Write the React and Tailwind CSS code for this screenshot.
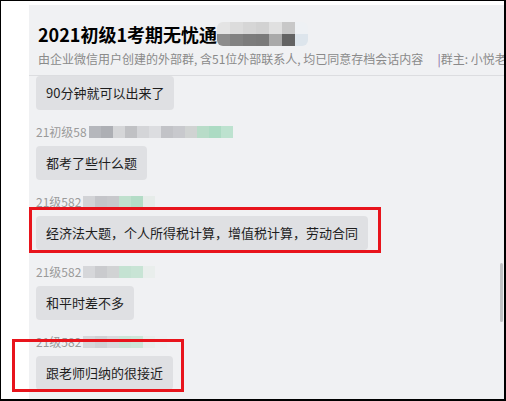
const font = { fontFamily: '"Microsoft YaHei", "Noto Sans CJK SC", "Noto Sans", sans-serif' };

function Mosaic({ top, bottom, cell = 12, h = 6 }) {
  return (
    <div className="flex flex-col blur-[0.6px]">
      {top && (
        <div className="flex">
          {top.map((c, i) => (
            <div key={i} className="shrink-0" style={{ width: cell, height: h, background: c }} />
          ))}
        </div>
      )}
      <div className="flex">
        {bottom.map((c, i) => (
          <div key={i} className="shrink-0" style={{ width: cell, height: h, background: c }} />
        ))}
      </div>
    </div>
  );
}

function Name({ text, mosaic }) {
  return (
    <div className="mt-[14px] flex h-4 items-center text-[12px] leading-4 text-[#9a9a9a]">
      <span>{text}</span>
      <div className="ml-[2px]">{mosaic}</div>
    </div>
  );
}

function Bubble({ children }) {
  return (
    <div className="flex">
      <div className="h-[34px] rounded-[4px] bg-[#dfe0e3] px-[10px] text-[13px] leading-[34px] text-[#1e1e1e]">
        {children}
      </div>
    </div>
  );
}

export default function App() {
  return (
    <div
      className="relative h-[401px] w-[506px] overflow-hidden border-t border-l border-r-2 border-b-2 border-black bg-white pl-[28px] pt-[4px]"
      style={font}
    >
      <div className="relative h-full overflow-hidden bg-[#f0f1f3]">
        <div className="border-b border-[#dcdde0] pt-[16px] pb-[8px] pl-[9px]">
          <div className="flex h-[26px] items-center whitespace-nowrap text-[18px] font-bold leading-[26px] text-black">
            <span>2021初级1考期无忧通</span>
            <div className="rounded-[6px] overflow-hidden">
              <Mosaic
                cell={13}
                h={12}
                top={["#e4e4e4", "#dcdcdc", "#d6d6d6", "#d2d2d2", "#e0e0e0", "#c8c8c8", "#eef1f4"]}
                bottom={["#8c8c8c", "#828282", "#7c7c7c", "#7a7a7a", "#a9a9a9", "#636363", "#dde5ec"]}
              />
            </div>
          </div>
          <div className="mt-[4px] h-4 whitespace-nowrap text-[12px] leading-4 text-[#8a8a8a]">
            由企业微信用户创建的外部群, 含51位外部联系人, 均已同意存档会话内容
            <span className="ml-[14px] text-[#8a6aa0]">|</span>群主: 小悦老师
          </div>
        </div>

        <div className="px-[7px]">
          <Bubble>90分钟就可以出来了</Bubble>

          <Name
            text="21初级58"
            mosaic={
              <Mosaic
                h={12}
                bottom={["#b5b7bc", "#adafb4", "#d5d6d8", "#c0c1c4", "#d4d5d8", "#dcdde0", "#c2c3c7", "#c8c9cd", "#d0d3d2", "#b8dcc8", "#acdbc3", "#bde2cf"]}
              />
            }
          />
          <div className="mt-[6px]">
            <Bubble>都考了些什么题</Bubble>
          </div>

          <Name
            text="21级582"
            mosaic={
              <Mosaic h={12} bottom={["#d2d3d6", "#c4c5c9", "#c7c8cb", "#bfe0cd", "#b3dcc6", "#e6ece9"]} />
            }
          />
          <div className="mt-[6px]">
            <Bubble>经济法大题，个人所得税计算，增值税计算，劳动合同</Bubble>
          </div>

          <Name
            text="21级582"
            mosaic={
              <Mosaic h={12} bottom={["#d6d7da", "#cacbce", "#d1d3d4", "#c4e2d2", "#c8e4d5", "#e9eeec"]} />
            }
          />
          <div className="mt-[6px]">
            <Bubble>和平时差不多</Bubble>
          </div>

          <Name
            text="21级582"
            mosaic={
              <Mosaic h={12} bottom={["#d6d7da", "#d0d1d4", "#d8d9dc", "#c9e4d6", "#cce6d8", "#e9eeec", "#eef0f1"]} />
            }
          />
          <div className="mt-[6px]">
            <Bubble>跟老师归纳的很接近</Bubble>
          </div>
        </div>

        <div className="absolute right-[1px] top-[258px] h-[59px] w-[3px] rounded-full bg-[#c1c2c4]" />
      </div>

      <div className="absolute left-[28px] top-[206px] h-[46px] w-[352px] border-[3px] border-[#e8141c]" />
      <div className="absolute left-[11px] top-[338px] h-[53px] w-[172px] border-[3px] border-[#e8141c]" />
    </div>
  );
}
